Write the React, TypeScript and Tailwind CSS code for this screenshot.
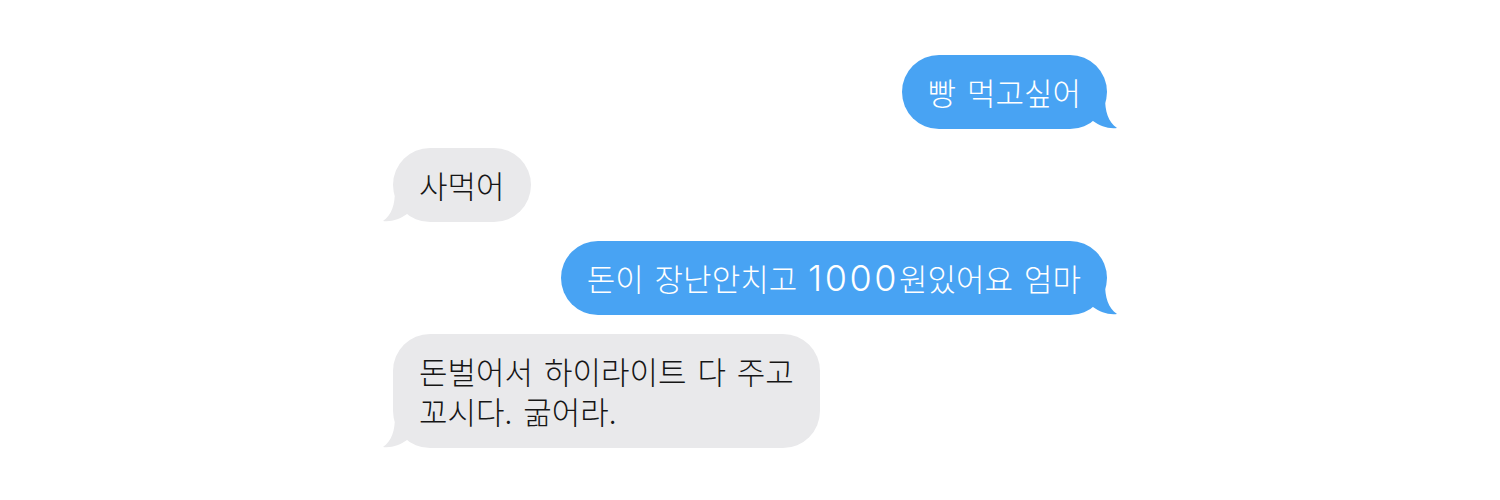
import React from "react";

type Msg = { from: "me" | "them"; text: React.ReactNode[] };

// the phone font draws digits much wider than the hangul font here, so they get their own span
const Num = ({ children }: { children: React.ReactNode }) => (
  <span
    className="text-[36px] leading-none tracking-[0.07em] font-light"
    style={{ fontFamily: 'Inter, "Noto Sans", sans-serif' }}
  >
    {children}
  </span>
);

const messages: Msg[] = [
  { from: "me", text: ["빵 먹고싶어"] },
  { from: "them", text: ["사먹어"] },
  {
    from: "me",
    text: [
      <>
        돈이 장난안치고 <Num>1000</Num>원있어요 엄마
      </>,
    ],
  },
  { from: "them", text: ["돈벌어서 하이라이트 다 주고", "꼬시다. 굶어라."] },
];

// iMessage style tail, drawn for the right side and mirrored for the left
const Tail = ({ side, color }: { side: "left" | "right"; color: string }) => (
  <svg
    width="26"
    height="32"
    viewBox="0 0 26 32"
    className={`absolute bottom-0 ${side === "right" ? "-right-[12px]" : "-left-[12px] -scale-x-100"}`}
  >
    <path d="M0 0 L12 0 C12 14 15 25 24 31 C15 32 7 29 0 24 Z" fill={color} />
  </svg>
);

const Bubble = ({ msg }: { msg: Msg }) => {
  const mine = msg.from === "me";
  const color = mine ? "#48a3f3" : "#e9e9eb";
  return (
    <div className={`flex ${mine ? "justify-end" : "justify-start"}`}>
      <div
        className={`relative rounded-[37px] px-[26px] py-[17px] text-[31px] leading-[40px] font-light [word-spacing:4px] ${
          mine ? "bg-[#48a3f3] text-white" : "bg-[#e9e9eb] text-[#161616]"
        }`}
      >
        <Tail side={mine ? "right" : "left"} color={color} />
        <div className="relative">
          {msg.text.map((t, i) => (
            <div key={i} className="h-[40px] whitespace-nowrap">
              {t}
            </div>
          ))}
        </div>
      </div>
    </div>
  );
};

export default function App() {
  return (
    <div
      className="w-[1500px] h-[500px] bg-white pt-[55px]"
      style={{ fontFamily: '"Noto Sans CJK KR", "Noto Sans", sans-serif' }}
    >
      <div className="mx-auto w-[714px] flex flex-col gap-[19px]">
        {messages.map((m, i) => (
          <Bubble key={i} msg={m} />
        ))}
      </div>
    </div>
  );
}
